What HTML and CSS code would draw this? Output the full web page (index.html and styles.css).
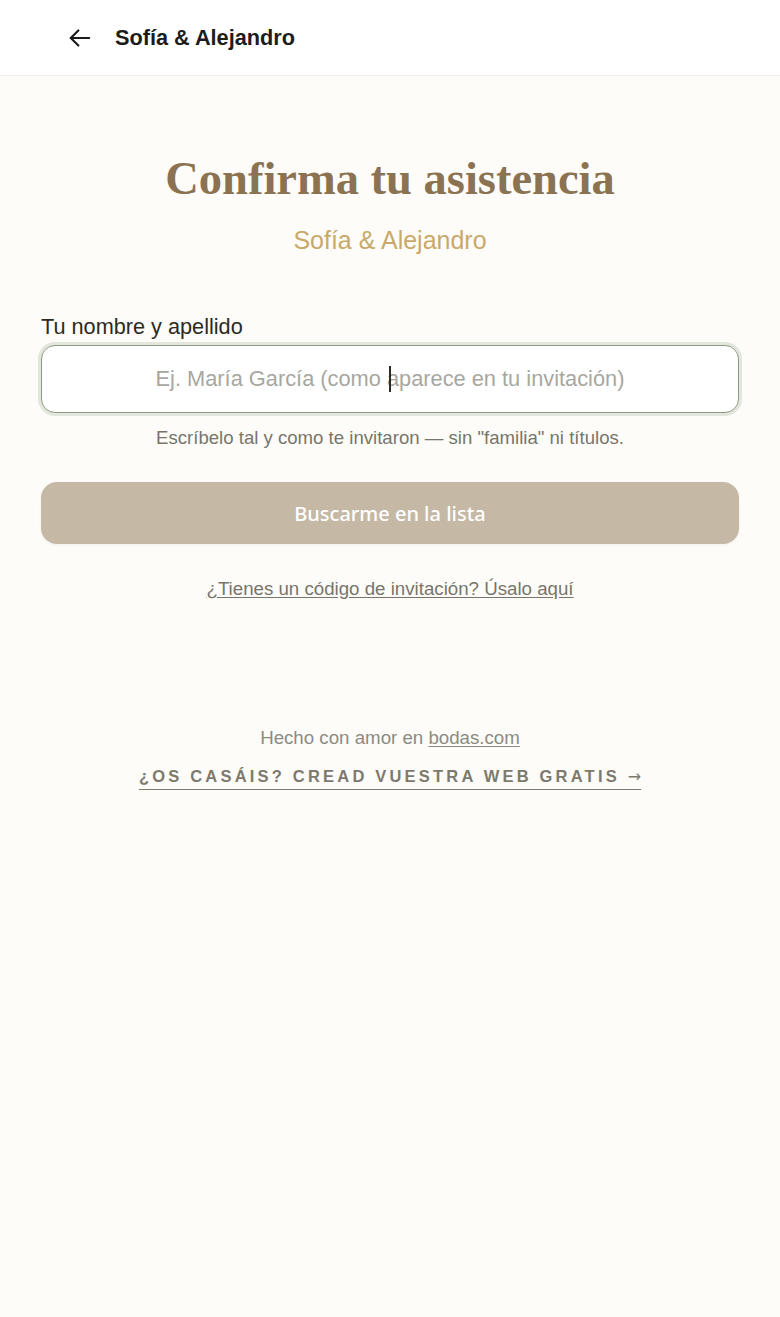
FILE: index.html
```html
<!DOCTYPE html>
<html lang="es">
<head>
<meta charset="utf-8">
<title>Confirma tu asistencia</title>
<link rel="stylesheet" href="styles.css">
</head>
<body>
<header class="topbar">
  <a class="back" href="#" aria-label="Volver">
    <svg width="26" height="26" viewBox="0 0 24 24" fill="none" stroke="#1c1c1c" stroke-width="2" stroke-linecap="round" stroke-linejoin="round"><path d="M20.5 12H3.5"/><path d="M10.5 5l-7 7 7 7"/></svg>
  </a>
  <span class="topbar-title">Sofía &amp; Alejandro</span>
</header>
<main class="content">
  <h1 class="title">Confirma tu asistencia</h1>
  <p class="subtitle">Sofía &amp; Alejandro</p>
  <form class="form">
    <label class="label" for="name">Tu nombre y apellido</label>
    <div class="field">
      <input class="input" id="name" type="text" placeholder="Ej. María García (como aparece en tu invitación)">
      <span class="caret"></span>
    </div>
    <p class="hint">Escríbelo tal y como te invitaron — sin "familia" ni títulos.</p>
    <button class="btn" type="button">Buscarme en la lista</button>
    <a class="code-link" href="#">¿Tienes un código de invitación? Úsalo aquí</a>
  </form>
  <footer class="footer">
    <p class="made">Hecho con amor en <a href="#">bodas.com</a></p>
    <a class="cta" href="#">¿Os casáis? Cread vuestra web gratis <span class="cta-arrow">→</span></a>
  </footer>
</main>
</body>
</html>
```
FILE: styles.css
```css
html, body {
  margin: 0;
  padding: 0;
  background: #fdfcf8;
  font-family: "Liberation Sans", Arial, sans-serif;
}
.topbar {
  height: 76px;
  background: #ffffff;
  border-bottom: 1px solid #efeee8;
  display: flex;
  align-items: center;
  padding-left: 67px;
  gap: 22px;
  box-sizing: border-box;
}
.back {
  display: flex;
  align-items: center;
}
.topbar-title {
  font-weight: 700;
  font-size: 21.7px;
  color: #1c1c1c;
}
.content {
  padding: 0 41px;
  display: flex;
  flex-direction: column;
  align-items: stretch;
}
.title {
  margin: 77px 0 0;
  text-align: center;
  font-family: "Liberation Serif", "Times New Roman", serif;
  font-weight: 700;
  font-size: 46.5px;
  line-height: 52px;
  color: #8b7352;
}
.subtitle {
  margin: 20px 0 0;
  text-align: center;
  font-size: 25px;
  line-height: 30px;
  color: #c9a96a;
}
.form {
  display: flex;
  flex-direction: column;
  margin-top: 58px;
}
.label {
  font-size: 21.7px;
  line-height: 28px;
  color: #2b2b23;
  margin-bottom: 4px;
}
.field {
  position: relative;
}
.input {
  width: 100%;
  box-sizing: border-box;
  height: 68px;
  border: 1.5px solid #8f9a84;
  border-radius: 14px;
  box-shadow: 0 0 0 3px #e3e6dc;
  background: #ffffff;
  text-align: center;
  font-family: "Liberation Sans", Arial, sans-serif;
  font-size: 21.8px;
  color: #2b2b23;
  outline: none;
}
.input::placeholder {
  color: #a7a7a1;
}
.caret {
  position: absolute;
  left: 348px;
  top: 21px;
  width: 1.5px;
  height: 26px;
  background: #2b2b23;
}
.hint {
  margin: 14px 0 0;
  text-align: center;
  font-size: 18.6px;
  line-height: 22px;
  color: #77756c;
}
.btn {
  margin-top: 33px;
  height: 62px;
  border: none;
  border-radius: 16px;
  background: #c5b8a5;
  color: #ffffff;
  font-family: "Noto Sans", sans-serif;
  font-weight: 500;
  font-size: 20px;
  box-shadow: 0 1px 3px rgba(0,0,0,0.06);
}
.code-link {
  margin-top: 34px;
  align-self: center;
  font-size: 18.7px;
  line-height: 22px;
  color: #77756c;
  text-decoration: underline;
  text-underline-offset: 2px;
}
.footer {
  margin-top: 127px;
  display: flex;
  flex-direction: column;
  align-items: center;
}
.made {
  margin: 0;
  font-size: 18.7px;
  line-height: 22px;
  color: #8c8a84;
}
.made a {
  color: #8c8a84;
  text-decoration: underline;
  text-underline-offset: 2px;
}
.cta {
  margin-top: 17px;
  font-size: 16.5px;
  font-weight: 700;
  letter-spacing: 3.2px;
  text-transform: uppercase;
  color: #7c7a6f;
  text-decoration: none;
  border-bottom: 1.5px solid #7c7a6f;
  padding-bottom: 2px;
  line-height: 20px;
}
.cta-arrow {
  font-family: "DejaVu Sans", sans-serif;
  font-weight: 400;
  font-size: 16px;
  letter-spacing: 0;
}
```
